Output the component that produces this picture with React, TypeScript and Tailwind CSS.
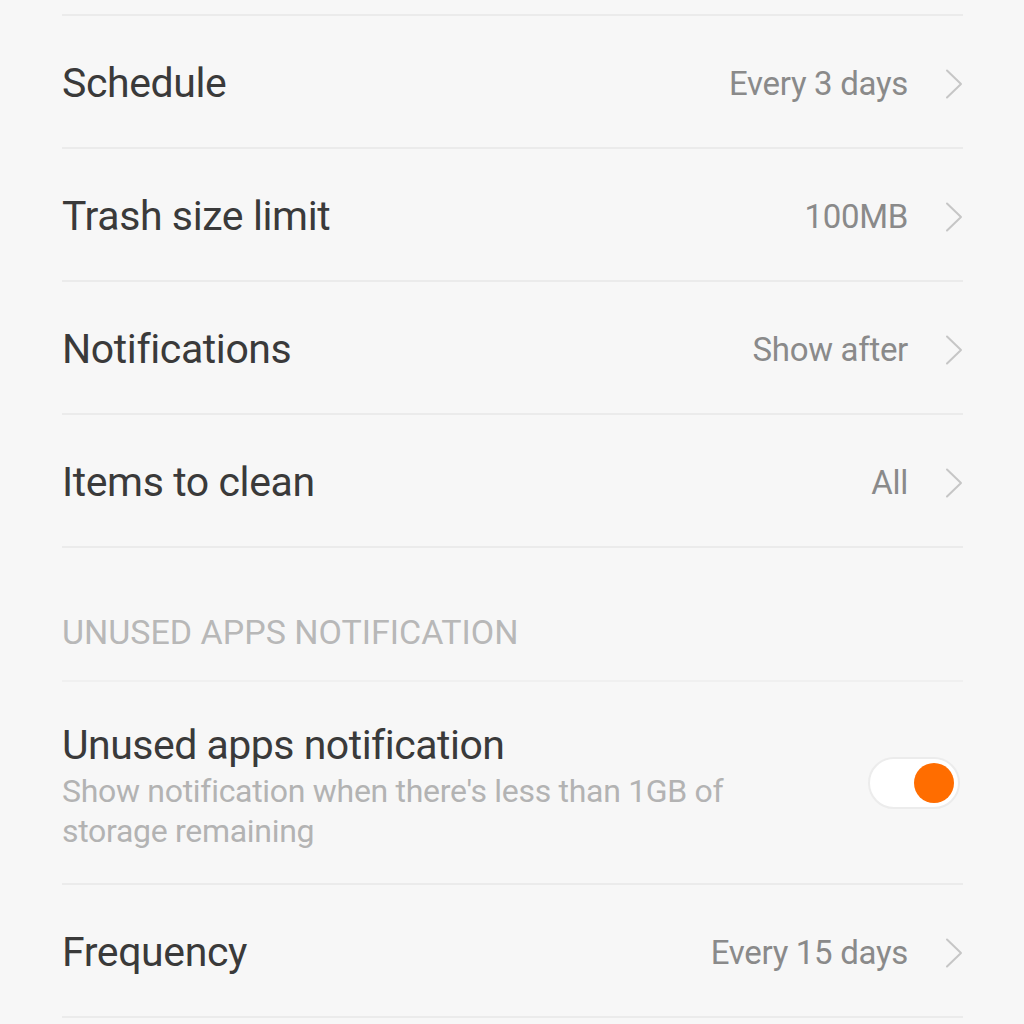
const rows = [
  { label: 'Schedule', value: 'Every 3 days' },
  { label: 'Trash size limit', value: '100MB' },
  { label: 'Notifications', value: 'Show after' },
  { label: 'Items to clean', value: 'All' },
];

function Chevron() {
  return (
    <svg width="18" height="30" viewBox="0 0 18 30" fill="none" className="text-[#c6c6c6]">
      <path d="M2 1.5 L16 15 L2 28.5" stroke="currentColor" strokeWidth="2" strokeLinecap="round" strokeLinejoin="round" />
    </svg>
  );
}

function NavRow({ label, value }: { label: string; value: string }) {
  return (
    <div className="flex h-[133px] items-center justify-between border-b-2 border-[#ebebeb] pt-[4px]">
      <span className="text-[41px] text-[#3a3a3a] tracking-[-0.4px]">{label}</span>
      <div className="flex items-center gap-[37px]">
        <span className="text-[33px] text-[#8a8a8a] tracking-[-0.3px]">{value}</span>
        <Chevron />
      </div>
    </div>
  );
}

export default function App() {
  return (
    <div className="min-h-screen bg-[#f7f7f7] px-[62px] pr-[61px]" style={{ fontFamily: 'Roboto, "Liberation Sans", sans-serif' }}>
      <div className="h-[16px] border-b-2 border-[#ebebeb]" />
      {rows.map((r) => (
        <NavRow key={r.label} {...r} />
      ))}

      <div className="flex h-[134px] items-end border-b-2 border-[#f0f0f0] pb-[22px]">
        <span className="text-[34px] text-[#b8b8b8] tracking-[0px]">UNUSED APPS NOTIFICATION</span>
      </div>

      <div className="flex h-[203px] items-center justify-between border-b-2 border-[#ebebeb]">
        <div className="flex flex-col pt-[6px]">
          <span className="text-[41px] leading-[48px] text-[#3a3a3a] tracking-[-0.5px]">Unused apps notification</span>
          <span className="mt-[2px] w-[700px] text-[32px] leading-[40px] text-[#b3b3b3] tracking-[-0.3px]">
            Show notification when there's less than 1GB of storage remaining
          </span>
        </div>
        <div className="mr-[3px] flex h-[52px] w-[92px] items-center justify-end rounded-full border-2 border-[#ececec] bg-white pr-[4px]">
          <div className="h-[40px] w-[40px] rounded-full bg-[#ff6d00]" />
        </div>
      </div>

      <NavRow label="Frequency" value="Every 15 days" />
    </div>
  );
}
